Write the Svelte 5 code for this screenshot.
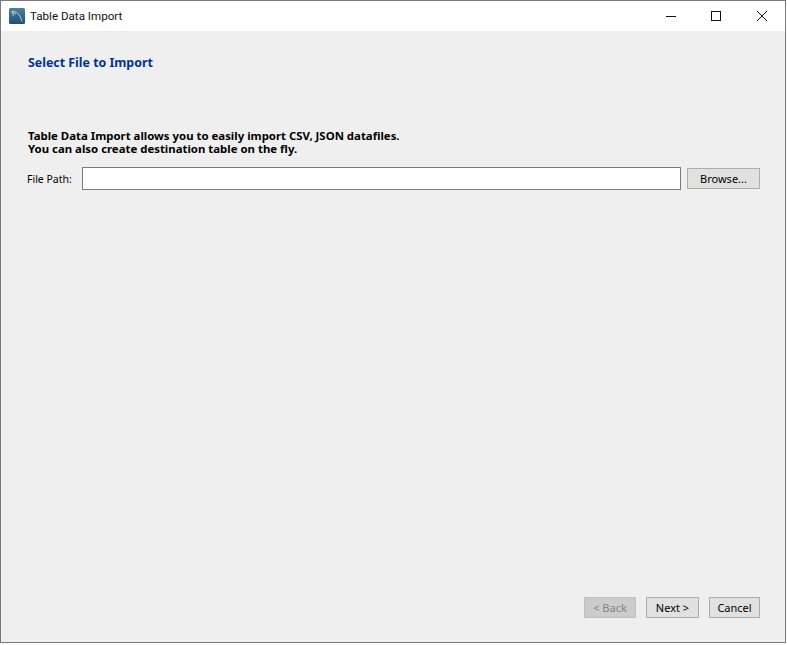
<script lang="ts">
  let filePath = $state('');
</script>

<div class="window">
  <header class="titlebar">
    <svg class="app-icon" width="16" height="16" viewBox="0 0 16 16" aria-hidden="true">
      <defs>
        <linearGradient id="icon-bg" x1="0" y1="0" x2="0" y2="1">
          <stop offset="0" stop-color="#4f7f9f" />
          <stop offset="1" stop-color="#1d5277" />
        </linearGradient>
      </defs>
      <rect width="16" height="16" rx="1.5" fill="url(#icon-bg)" />
      <path d="M2.5 3.5C7 2.5 11 6 13 13.5M3 3.5l1.5 4.5M3.5 4L7 6" fill="none" stroke="#c6d3dc" stroke-width="0.9" />
    </svg>
    <span class="title">Table Data Import</span>
    <div class="controls">
      <svg width="10" height="10" viewBox="0 0 10 10" aria-hidden="true"><path d="M0 5.5h10" stroke="#111" fill="none" /></svg>
      <svg class="maximize" width="10" height="10" viewBox="0 0 10 10" aria-hidden="true"><rect x="0.5" y="0.5" width="9" height="9" stroke="#111" fill="none" /></svg>
      <svg width="10" height="10" viewBox="0 0 10 10" aria-hidden="true"><path d="M0 0l10 10M10 0L0 10" stroke="#111" fill="none" /></svg>
    </div>
  </header>

  <main class="body">
    <h1>Select File to Import</h1>
    <p class="intro">Table Data Import allows you to easily import CSV, JSON datafiles.<br />You can also create destination table on the fly.</p>
    <div class="path-row">
      <label for="file-path">File Path:</label>
      <input id="file-path" type="text" bind:value={filePath} />
      <button class="browse">Browse...</button>
    </div>
    <footer class="actions">
      <button class="back" disabled>&lt; Back</button>
      <button class="next">Next &gt;</button>
      <button class="cancel">Cancel</button>
    </footer>
  </main>
</div>

<style>
  :global(body) { background: #fff; }
  .window {
    width: 786px;
    height: 643px;
    box-sizing: border-box;
    border: 1px solid #7a7a7a;
    display: flex;
    flex-direction: column;
    background: #efefef;
    font-family: "Noto Sans", sans-serif;
    color: #000;
  }
  .titlebar {
    height: 30px;
    flex: none;
    display: flex;
    align-items: center;
    background: #fff;
    padding-left: 8px;
  }
  .app-icon { flex: none; }
  .title {
    margin-left: 5px;
    font: 11.6px Roboto, sans-serif;
    color: #111;
  }
  .controls {
    margin-left: auto;
    display: flex;
    padding-right: 18px;
  }
  .maximize { margin: 0 36px 0 35px; }
  .body {
    flex: 1;
    display: flex;
    flex-direction: column;
    padding: 24px 25px 24px 27px;
  }
  h1 {
    margin: 0;
    font-size: 12.4px;
    line-height: 15px;
    font-weight: 700;
    color: #003399;
  }
  .intro {
    margin: 59px 0 0;
    font-size: 11.4px;
    line-height: 13px;
    font-weight: 700;
  }
  .path-row {
    margin-top: 12px;
    display: flex;
    align-items: center;
  }
  label { width: 54px; margin-left: -1px; padding-right: 1px; box-sizing: content-box; font-size: 10.5px; flex: none; }
  input {
    width: 599px;
    height: 23px;
    box-sizing: border-box;
    border: 1px solid #7a7a7a;
    background: #fff;
    outline: none;
    padding: 0 3px;
  }
  button {
    box-sizing: border-box;
    height: 21px;
    border: 1px solid #adadad;
    background: #e1e1e1;
    font: 11px "Noto Sans", sans-serif;
    color: #000;
    padding: 0;
  }
  .browse { width: 73px; margin-left: 6px; }
  .actions {
    margin-top: auto;
    display: flex;
    justify-content: flex-end;
    gap: 10px;
  }
  .back { width: 52px; background: #ccc; border-color: #bfbfbf; color: #838383; }
  .next { width: 53px; }
  .cancel { width: 51px; }
</style>
